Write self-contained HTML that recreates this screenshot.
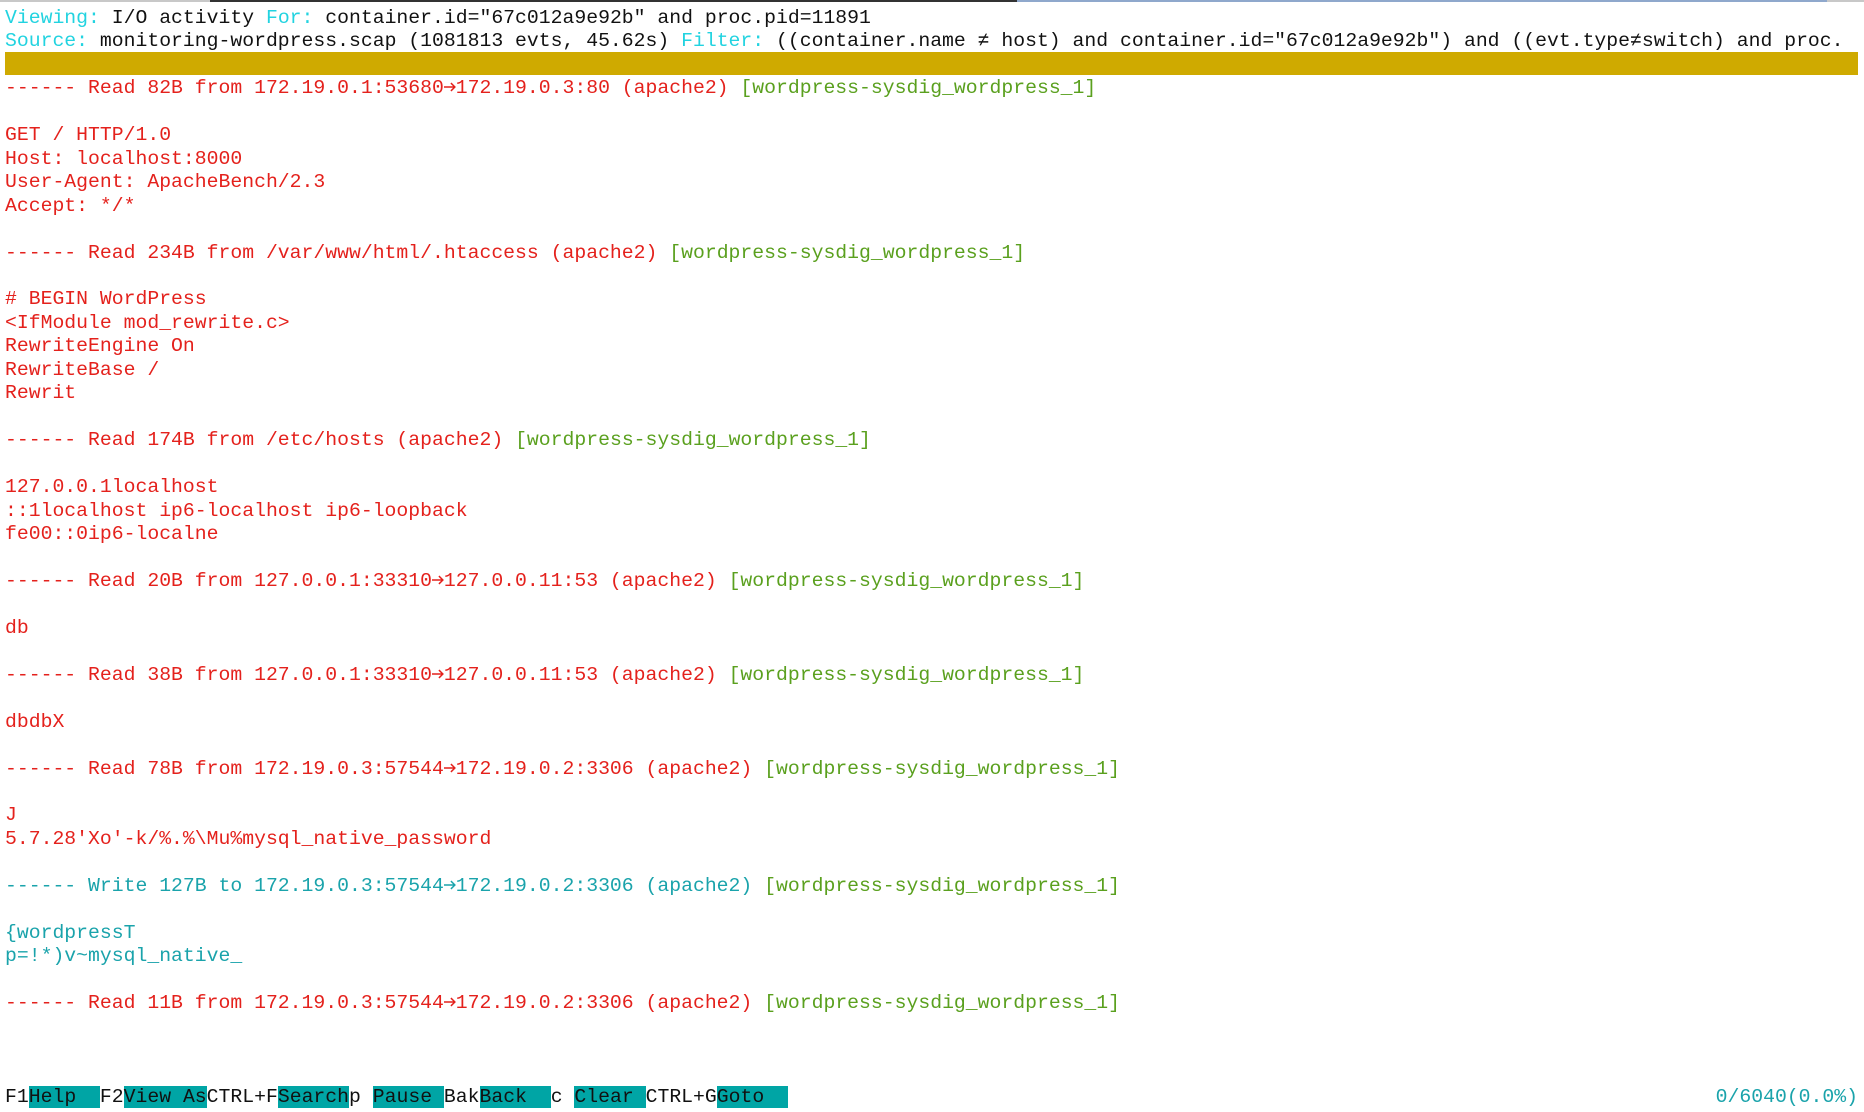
<!DOCTYPE html>
<html><head><meta charset="utf-8"><style>
html,body{margin:0;padding:0;background:#fff;width:1864px;height:1112px;overflow:hidden}
.top{position:absolute;top:0;height:2px}
pre{margin:0;position:absolute;left:5px;top:7px;font-family:"Liberation Mono","DejaVu Sans Mono",monospace;font-size:19.77px;line-height:23.45px;color:#111;white-space:pre}
.c{color:#22d3e0}.r{color:#e4211c}.g{color:#5aa01e}.t{color:#1aa3ab}
.a{display:inline-block;width:11.86px;height:12px;vertical-align:0}
.bar{position:absolute;left:5px;top:52px;width:1853px;height:23px;background:#cfaa00}
.h{background:#00a5a5;color:#111}
.st{position:absolute;right:6px;top:1085.5px;font-family:"Liberation Mono",monospace;font-size:19.77px;line-height:23.5px;color:#1aa3ab}
</style></head><body>
<div class="top" style="left:0;width:210px;background:#c8c8c8"></div>
<div class="top" style="left:210px;width:807px;background:#333"></div>
<div class="top" style="left:1017px;width:810px;background:#8fa8cc"></div>
<div class="top" style="left:1827px;width:37px;background:#c8c8c8"></div>
<div class="bar"></div>
<pre><span class="c">Viewing:</span> I/O activity <span class="c">For:</span> container.id="67c012a9e92b" and proc.pid=11891
<span class="c">Source:</span> monitoring-wordpress.scap (1081813 evts, 45.62s) <span class="c">Filter:</span> ((container.name ≠ host) and container.id="67c012a9e92b") and ((evt.type≠switch) and proc.

<span class="r">------ Read 82B from 172.19.0.1:53680<svg class="a" viewBox="0 0 12 12"><path d="M0 6H11M7 2L11 6L7 10" stroke="currentColor" stroke-width="1.5" fill="none"/></svg>172.19.0.3:80 (apache2)</span> <span class="g">[wordpress-sysdig_wordpress_1]</span>
<span class="r">
GET / HTTP/1.0
Host: localhost:8000
User-Agent: ApacheBench/2.3
Accept: */*

------ Read 234B from /var/www/html/.htaccess (apache2)</span> <span class="g">[wordpress-sysdig_wordpress_1]</span>
<span class="r">
# BEGIN WordPress
&lt;IfModule mod_rewrite.c&gt;
RewriteEngine On
RewriteBase /
Rewrit

------ Read 174B from /etc/hosts (apache2)</span> <span class="g">[wordpress-sysdig_wordpress_1]</span>
<span class="r">
127.0.0.1localhost
::1localhost ip6-localhost ip6-loopback
fe00::0ip6-localne

------ Read 20B from 127.0.0.1:33310<svg class="a" viewBox="0 0 12 12"><path d="M0 6H11M7 2L11 6L7 10" stroke="currentColor" stroke-width="1.5" fill="none"/></svg>127.0.0.11:53 (apache2)</span> <span class="g">[wordpress-sysdig_wordpress_1]</span>
<span class="r">
db

------ Read 38B from 127.0.0.1:33310<svg class="a" viewBox="0 0 12 12"><path d="M0 6H11M7 2L11 6L7 10" stroke="currentColor" stroke-width="1.5" fill="none"/></svg>127.0.0.11:53 (apache2)</span> <span class="g">[wordpress-sysdig_wordpress_1]</span>
<span class="r">
dbdbX

------ Read 78B from 172.19.0.3:57544<svg class="a" viewBox="0 0 12 12"><path d="M0 6H11M7 2L11 6L7 10" stroke="currentColor" stroke-width="1.5" fill="none"/></svg>172.19.0.2:3306 (apache2)</span> <span class="g">[wordpress-sysdig_wordpress_1]</span>
<span class="r">
J
5.7.28'Xo'-k/%.%\Mu%mysql_native_password
</span>
<span class="t">------ Write 127B to 172.19.0.3:57544<svg class="a" viewBox="0 0 12 12"><path d="M0 6H11M7 2L11 6L7 10" stroke="currentColor" stroke-width="1.5" fill="none"/></svg>172.19.0.2:3306 (apache2)</span> <span class="g">[wordpress-sysdig_wordpress_1]</span>
<span class="t">
{wordpressT
p=!*)v~mysql_native_
</span>
<span class="r">------ Read 11B from 172.19.0.3:57544<svg class="a" viewBox="0 0 12 12"><path d="M0 6H11M7 2L11 6L7 10" stroke="currentColor" stroke-width="1.5" fill="none"/></svg>172.19.0.2:3306 (apache2)</span> <span class="g">[wordpress-sysdig_wordpress_1]</span>



F1<span class="h">Help  </span>F2<span class="h">View As</span>CTRL+F<span class="h">Search</span>p <span class="h">Pause </span>Bak<span class="h">Back  </span>c <span class="h">Clear </span>CTRL+G<span class="h">Goto  </span></pre>
<div class="st">0/6040(0.0%)</div>
</body></html>
